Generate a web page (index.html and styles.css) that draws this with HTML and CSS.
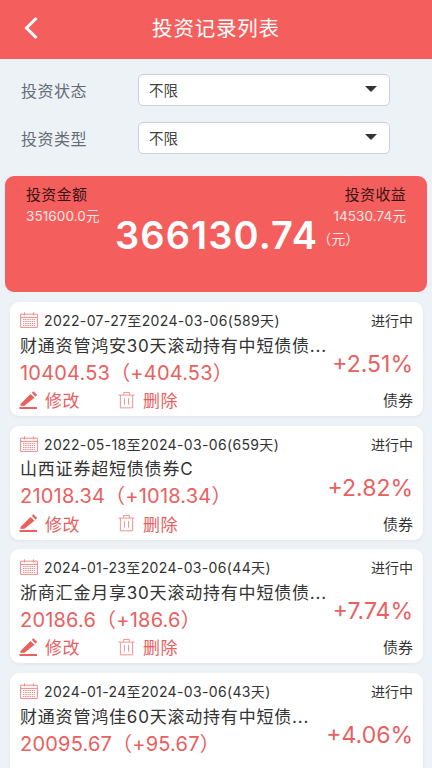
FILE: index.html
```html
<!DOCTYPE html>
<html lang="zh-CN">
<head>
<meta charset="utf-8">
<title>投资记录列表</title>
<link rel="stylesheet" href="styles.css">
</head>
<body>
<svg class="sprites" width="0" height="0" aria-hidden="true">
  <symbol id="cal" viewBox="0 0 18 16"><path d="M.6 2.2h16.8v13.2H.6zM.6 5.4h16.8M4.500.4v3M13.500.4v3" fill="none" stroke="currentColor" stroke-width="1"/><path d="M3 7.500h12M3 9.500h12M3 11.500h12M3 13.500h12" stroke="currentColor" stroke-width="1" stroke-dasharray="1.400 .8" fill="none"/></symbol>
  <symbol id="edit" viewBox="0 0 20 18"><path d="M1.500 13 11.500 3l4 3.800L5.500 14.700 1.500 15z" fill="currentColor"/><path d="M12.800 1.800 14.300.3l3.800 3.500-1.500 1.900z" fill="currentColor"/><path d="M.5 16h17.500v2H.5z" fill="currentColor"/></symbol>
  <symbol id="trash" viewBox="0 0 18 18"><path d="M.5 3.800h17M6 3.500V1h6v2.500M2.500 4v13.300h13V4M6.800 7v7M11.200 7v7" fill="none" stroke="currentColor" stroke-width="1"/></symbol>
</svg>
<header class="topbar">
  <svg class="back" viewBox="0 0 16 26" aria-label="返回"><path d="M13.500 3 3.500 13l10 10" fill="none" stroke="#fff" stroke-width="3"/></svg>
  <h1>投资记录列表</h1>
</header>
<section class="filters">
  <div class="filter"><span class="filter-label">投资状态</span><div class="select"><span>不限</span><i class="caret"></i></div></div>
  <div class="filter"><span class="filter-label">投资类型</span><div class="select"><span>不限</span><i class="caret"></i></div></div>
</section>
<section class="summary">
  <div class="sum-side">
    <div class="sum-title">投资金额</div>
    <div class="sum-val">351600.0元</div>
  </div>
  <div class="sum-total"><b>366130.74</b><span>（元）</span></div>
  <div class="sum-side right">
    <div class="sum-title">投资收益</div>
    <div class="sum-val">14530.74元</div>
  </div>
</section>
<main class="list">
  <article class="card">
    <div class="row top"><svg class="i-cal"><use href="#cal"/></svg><span class="date">2022-07-27至2024-03-06(589天)</span><span class="state">进行中</span></div>
    <div class="mid">
      <div class="mid-left"><div class="name">财通资管鸿安30天滚动持有中短债债...</div><div class="amount">10404.53（+404.53）</div></div>
      <div class="pct">+2.51%</div>
    </div>
    <div class="row actions"><span class="act first"><svg class="i-edit"><use href="#edit"/></svg>修改</span><span class="act"><svg class="i-trash"><use href="#trash"/></svg>删除</span><span class="kind">债券</span></div>
  </article>
  <article class="card">
    <div class="row top"><svg class="i-cal"><use href="#cal"/></svg><span class="date">2022-05-18至2024-03-06(659天)</span><span class="state">进行中</span></div>
    <div class="mid">
      <div class="mid-left"><div class="name">山西证券超短债债券C</div><div class="amount">21018.34（+1018.34）</div></div>
      <div class="pct">+2.82%</div>
    </div>
    <div class="row actions"><span class="act first"><svg class="i-edit"><use href="#edit"/></svg>修改</span><span class="act"><svg class="i-trash"><use href="#trash"/></svg>删除</span><span class="kind">债券</span></div>
  </article>
  <article class="card">
    <div class="row top"><svg class="i-cal"><use href="#cal"/></svg><span class="date">2024-01-23至2024-03-06(44天)</span><span class="state">进行中</span></div>
    <div class="mid">
      <div class="mid-left"><div class="name">浙商汇金月享30天滚动持有中短债债...</div><div class="amount">20186.6（+186.6）</div></div>
      <div class="pct">+7.74%</div>
    </div>
    <div class="row actions"><span class="act first"><svg class="i-edit"><use href="#edit"/></svg>修改</span><span class="act"><svg class="i-trash"><use href="#trash"/></svg>删除</span><span class="kind">债券</span></div>
  </article>
  <article class="card">
    <div class="row top"><svg class="i-cal"><use href="#cal"/></svg><span class="date">2024-01-24至2024-03-06(43天)</span><span class="state">进行中</span></div>
    <div class="mid">
      <div class="mid-left"><div class="name">财通资管鸿佳60天滚动持有中短债...</div><div class="amount">20095.67（+95.67）</div></div>
      <div class="pct">+4.06%</div>
    </div>
  </article>
</main>
</body>
</html>
```
FILE: styles.css
```css
* { box-sizing: border-box; margin: 0; padding: 0; }
html, body { height: 100%; overflow: hidden; }
body {
  background: #edf2f7;
  font-family: Inter, "Noto Sans CJK SC", sans-serif;
  color: #333;
}
.sprites { position: absolute; }
.topbar {
  height: 58.500px;
  background: #f45f5e;
  display: flex;
  align-items: center;
  justify-content: center;
  position: relative;
}
.topbar h1 { font-size: 20.500px; font-weight: 400; color: #fff; line-height: 1; letter-spacing: .8px; }
.back { position: absolute; left: 23px; top: 15px; width: 16px; height: 26px; }
.filters { padding: 15.500px 42px 0 21px; display: flex; flex-direction: column; gap: 16px; }
.filter { display: flex; align-items: center; height: 32px; }
.filter-label { width: 117px; font-size: 16px; color: #666c75; letter-spacing: .5px; margin-top: -1px; }
.select {
  flex: 1;
  height: 32px;
  background: #fff;
  border: 1px solid #c9d0d9;
  border-radius: 5px;
  display: flex;
  align-items: center;
  justify-content: space-between;
  padding: 0 12px 0 10px;
  font-size: 14.500px;
  color: #444;
}
.select span { margin-top: -2px; }
.caret { width: 0; height: 0; border: 6.500px solid transparent; border-top: 6px solid #333; border-bottom: 0; margin-top: -2px; }
.summary {
  margin: 22px 5px 0;
  height: 116px;
  background: #f45f5e;
  border-radius: 9px;
  padding: 8px 21px 0;
  display: flex;
  justify-content: space-between;
  position: relative;
  color: #fff;
}
.sum-title { font-size: 15px; color: #3a1414; line-height: 21px; letter-spacing: .3px; }
.sum-val { font-size: 13.500px; line-height: 22px; color: #fde6e4; letter-spacing: .1px; }
.right { text-align: right; }
.sum-total { position: absolute; left: 110px; top: 31px; display: flex; align-items: center; white-space: nowrap; }
.sum-total b { font-size: 38px; font-weight: 600; line-height: 56px; letter-spacing: 1.100px; }
.sum-total span { font-size: 14px; margin: 6px 0 0 -1px; color: #fde6e4; }
.list { padding: 10px 9px 0 10px; display: flex; flex-direction: column; gap: 9.700px; }
.card {
  height: 114px;
  flex: none;
  background: #fff;
  border-radius: 9px;
  padding: 8px 10px 0 10px;
  box-shadow: 0 1px 3px rgba(120, 135, 155, .12);
}
.row { display: flex; align-items: center; }
.top { height: 20px; }
.i-cal { width: 18px; height: 16px; color: #ef8b88; margin-right: 6px; flex: none; }
.date { font-size: 14px; color: #333; flex: 1; white-space: nowrap; letter-spacing: .35px; }
.state { font-size: 14px; color: #333; }
.mid { display: flex; justify-content: space-between; align-items: center; height: 56px; padding-top: 3px; }
.name { font-size: 17px; line-height: 26px; color: #333; white-space: nowrap; letter-spacing: .8px; margin-top: -1px; }
.amount { font-size: 20px; line-height: 26px; color: #e9605f; white-space: nowrap; letter-spacing: .2px; margin-top: 1px; }
.pct { font-size: 23px; color: #e9605f; white-space: nowrap; margin-top: 9px; }
.actions { height: 26px; color: #e9605f; font-size: 17px; padding-top: 1px; }
.act { display: flex; align-items: center; width: 99px; letter-spacing: .5px; }
.i-edit { width: 20px; height: 18px; margin-right: 6px; margin-left: -1px; }
.i-trash { width: 17px; height: 18px; margin-right: 8px; color: #ef8b88; margin-left: -1px; }
.kind { margin-left: auto; font-size: 15px; color: #333; }
```
